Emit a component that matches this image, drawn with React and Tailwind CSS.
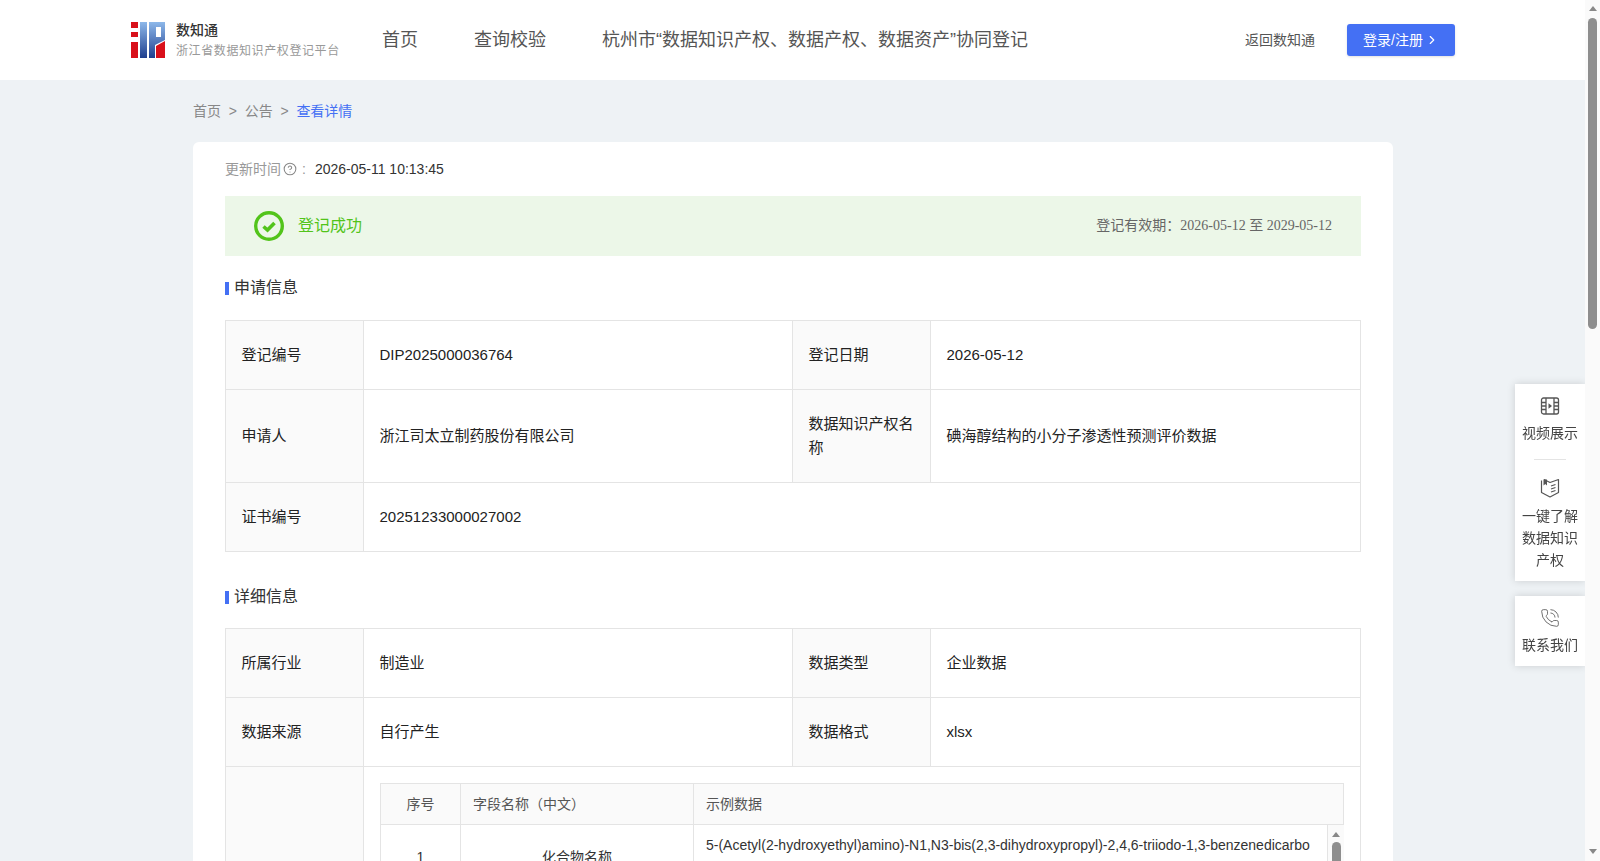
import { ChevronRight, CircleHelp, PhoneCall } from "lucide-react";

const nav = ["首页", "查询校验", "杭州市“数据知识产权、数据产权、数据资产”协同登记"];

function Logo() {
  return (
    <svg width="34" height="36" viewBox="0 0 34 36" className="shrink-0">
      <defs>
        <linearGradient id="logoBlue" x1="0" y1="0" x2="0" y2="1">
          <stop offset="0" stopColor="#8db8ea" />
          <stop offset="1" stopColor="#1f3f8f" />
        </linearGradient>
      </defs>
      <rect x="0" y="0" width="7" height="6" fill="#d9101a" />
      <rect x="0" y="10" width="7" height="5" fill="#d9101a" />
      <rect x="0" y="20" width="7" height="16" fill="#d9101a" />
      <rect x="9" y="0" width="7" height="36" fill="url(#logoBlue)" />
      <path d="M18 0H34V18L24 23V36H18Z" fill="url(#logoBlue)" />
      <rect x="25" y="5" width="5" height="10" fill="#fff" />
      <path d="M25 24L34 19V36H25Z" fill="#d9101a" />
    </svg>
  );
}

function Header() {
  return (
    <header className="h-20 bg-white flex items-center pl-[131px] pr-[130px]">
      <Logo />
      <div className="ml-[11px] w-[179px]">
        <div className="text-sm font-medium leading-5 text-[#333]">数知通</div>
        <div className="mt-px text-xs leading-5 tracking-[0.6px] text-[#999] whitespace-nowrap">浙江省数据知识产权登记平台</div>
      </div>
      <nav className="ml-[27px] flex items-center gap-[56px]">
        {nav.map((item) => (
          <a key={item} className="text-lg text-[#555] whitespace-nowrap">{item}</a>
        ))}
      </nav>
      <a className="ml-auto text-sm text-[#555]">返回数知通</a>
      <button className="ml-8 w-[108px] h-8 rounded-[3px] bg-[#4470f4] text-white text-sm flex items-center justify-center gap-0.5 shadow-sm">
        登录/注册 <ChevronRight size={14} />
      </button>
    </header>
  );
}

function SectionTitle({ children, className }) {
  return (
    <h2 className={"flex items-center gap-[5px] h-[22px] text-base font-normal text-[#333] " + className}>
      <span className="w-1 h-[13px] bg-[#4470f4]" />
      {children}
    </h2>
  );
}

const thCls = "border border-[#e4e4e4] bg-[#fafafa] pl-[15.5px] pr-3 py-[22px] text-left font-normal align-middle";
const tdCls = "border border-[#e4e4e4] pl-[15.5px] pr-4 py-[22px] align-middle";

function Cols() {
  return (
    <colgroup>
      <col className="w-[138px]" />
      <col className="w-[429px]" />
      <col className="w-[138px]" />
      <col className="w-[430px]" />
    </colgroup>
  );
}

function Row({ items }) {
  return (
    <tr>
      <th className={thCls}>{items[0]}</th>
      <td className={tdCls}>{items[1]}</td>
      <th className={thCls}>{items[2]}</th>
      <td className={tdCls}>{items[3]}</td>
    </tr>
  );
}

function ArrowUp() {
  return <div className="w-0 h-0 border-x-[4.5px] border-x-transparent border-b-[5px] border-b-[#888]" />;
}

function ArrowDown() {
  return <div className="w-0 h-0 border-x-[4.5px] border-x-transparent border-t-[5px] border-t-[#888]" />;
}

function SampleTable() {
  return (
    <div className="text-sm text-[#333]">
      <table className="w-full table-fixed border-collapse">
        <colgroup>
          <col className="w-[80px]" />
          <col className="w-[233px]" />
          <col />
        </colgroup>
        <thead>
          <tr className="h-[41px] bg-[#fafafa] text-[#555]">
            <th className="border border-[#e4e4e4] font-normal">序号</th>
            <th className="border border-[#e4e4e4] font-normal text-left px-3">字段名称（中文）</th>
            <th className="border border-[#e4e4e4] font-normal text-left px-3">示例数据</th>
          </tr>
        </thead>
      </table>
      <div className="h-[300px] flex overflow-hidden">
        <table className="flex-1 min-w-0 self-start table-fixed border-collapse">
          <colgroup>
            <col className="w-[80px]" />
            <col className="w-[233px]" />
            <col />
          </colgroup>
          <tbody>
            <tr>
              <td className="border border-t-0 border-[#e4e4e4] text-center">1</td>
              <td className="border border-t-0 border-[#e4e4e4] text-center">化合物名称</td>
              <td className="border border-t-0 border-[#e4e4e4] pl-3 pr-[14px] py-2 leading-6 break-all">
                5-(Acetyl(2-hydroxyethyl)amino)-N1,N3-bis(2,3-dihydroxypropyl)-2,4,6-triiodo-1,3-benzenedicarboxamide
              </td>
            </tr>
          </tbody>
        </table>
        <div className="w-4 shrink-0 bg-[#fafafa] flex flex-col items-center pt-[7px]">
          <ArrowUp />
          <div className="mt-[5px] w-[9px] h-[120px] rounded-full bg-[#8e8e8e]" />
        </div>
      </div>
    </div>
  );
}

function SideItem({ icon, lines, gap = "mt-[6px]" }) {
  return (
    <div className="flex flex-col items-center">
      {icon}
      <div className={gap + " text-sm leading-[22px] text-[#444] text-center"}>
        {lines.map((l) => (
          <div key={l}>{l}</div>
        ))}
      </div>
    </div>
  );
}

function FilmIcon() {
  return (
    <svg width="20" height="20" viewBox="0 0 20 20" fill="none" stroke="#555" strokeWidth="1.3">
      <rect x="1.5" y="2" width="17" height="16" rx="2" />
      <path d="M6 2V18M14 2V18M1.5 6.5H6M1.5 10H6M1.5 13.5H6M14 6.5H18.5M14 10H18.5M14 13.5H18.5" />
      <path d="M8.5 7.2L12 10L8.5 12.8Z" fill="#555" stroke="none" />
    </svg>
  );
}

function BookIcon() {
  return (
    <svg width="20" height="20" viewBox="0 0 20 20" fill="none" stroke="#555" strokeWidth="1.2">
      <path d="M1.5 2.5V14.5L10 19L18.5 14.5V1.5L10 4.5L4 1.5" strokeLinejoin="round" />
      <path d="M3.5 1.5H7V7.5L5.3 6L3.5 7.5Z" fill="#555" stroke="none" />
      <path d="M11 8L15.5 6.5M11 11L15.5 9.5M11 14L15.5 12.5" />
    </svg>
  );
}

function SidePanel() {
  return (
    <div className="fixed right-[15px] top-[384px] w-[70px] flex flex-col gap-[15px]">
      <div className="bg-white shadow-[0_0_8px_rgba(0,0,0,0.15)] pt-[12px] pb-[10px] flex flex-col items-center">
        <SideItem icon={<FilmIcon />} lines={["视频展示"]} />
        <div className="w-8 h-px bg-[#e4e4e4] mt-[15px] mb-[18px]" />
        <SideItem icon={<BookIcon />} lines={["一键了解", "数据知识", "产权"]} gap="mt-[7px]" />
      </div>
      <div className="bg-white shadow-[0_0_8px_rgba(0,0,0,0.15)] pt-[12px] pb-[10px] flex flex-col items-center">
        <SideItem icon={<PhoneCall size={20} strokeWidth={1} color="#555" />} lines={["联系我们"]} />
      </div>
    </div>
  );
}

function PageScrollbar() {
  return (
    <div className="fixed top-0 right-0 bottom-0 w-[15px] bg-[#fafafa] flex flex-col items-center pt-[6px] pb-[7px]">
      <ArrowUp />
      <div className="mt-[7px] w-[9px] h-[311px] rounded-full bg-[#8e8e8e]" />
      <div className="mt-auto">
        <ArrowDown />
      </div>
    </div>
  );
}

export default function App() {
  return (
    <div className="min-h-screen bg-[#eef2f5] pr-[15px] font-['Liberation_Sans','Noto_Sans_CJK_SC',sans-serif]">
      <Header />
      <main className="w-[1200px] ml-[193px] pb-10">
        <div className="h-[62px] flex items-center gap-[7.75px] text-sm text-[#888]">
          <a>首页</a>
          <span>&gt;</span>
          <a>公告</a>
          <span>&gt;</span>
          <a className="text-[#4470f4]">查看详情</a>
        </div>
        <section className="bg-white rounded-md px-8 pt-4 min-h-[2158px]">
          <div className="flex items-center h-[22px] text-sm text-[#999]">
            更新时间
            <CircleHelp size={14} strokeWidth={1.8} color="#888" className="ml-[2px]" />
            <span className="ml-[5px] mr-[9px]">:</span>
            <span className="text-[#333]">2026-05-11 10:13:45</span>
          </div>
          <div className="mt-4 h-[60px] bg-[#ecf7e8] flex items-center pl-[29px] pr-[29px]">
            <svg width="30" height="30" viewBox="0 0 30 30" fill="none" stroke="#52c41a">
              <circle cx="15" cy="15" r="13.3" strokeWidth="3.4" />
              <path d="M9.5 15.5L13.5 19L20.5 12" strokeWidth="3.6" />
            </svg>
            <span className="ml-[14px] text-base text-[#52c41a]">登记成功</span>
            <span className="ml-auto text-sm text-[#666] font-['Liberation_Serif','Noto_Sans_CJK_SC',serif]">
              登记有效期：2026-05-12 至 2029-05-12
            </span>
          </div>

          <SectionTitle className="mt-[21px] mb-[21px]">申请信息</SectionTitle>
          <table className="w-[1135px] table-fixed border-collapse text-[15px] leading-6 text-[#222]">
            <Cols />
            <tbody>
              <Row items={["登记编号", "DIP2025000036764", "登记日期", "2026-05-12"]} />
              <Row items={["申请人", "浙江司太立制药股份有限公司", "数据知识产权名称", "碘海醇结构的小分子渗透性预测评价数据"]} />
              <tr>
                <th className={thCls}>证书编号</th>
                <td className={tdCls} colSpan={3}>20251233000027002</td>
              </tr>
            </tbody>
          </table>

          <SectionTitle className="mt-[34px] mb-5">详细信息</SectionTitle>
          <table className="w-[1135px] table-fixed border-collapse text-[15px] leading-6 text-[#222]">
            <Cols />
            <tbody>
              <Row items={["所属行业", "制造业", "数据类型", "企业数据"]} />
              <Row items={["数据来源", "自行产生", "数据格式", "xlsx"]} />
              <tr>
                <th className={thCls} />
                <td className="border border-[#e4e4e4] p-4" colSpan={3}>
                  <SampleTable />
                </td>
              </tr>
            </tbody>
          </table>
        </section>
      </main>
      <SidePanel />
      <PageScrollbar />
    </div>
  );
}
